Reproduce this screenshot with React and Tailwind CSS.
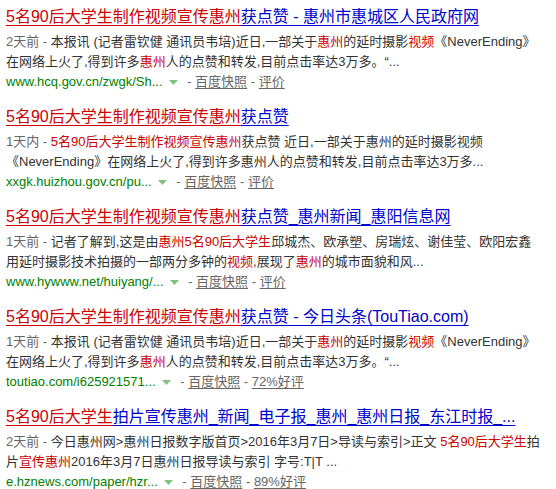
import React from "react";

const R = ({ children }) => <span className="text-[#cc0000]">{children}</span>;
const G = ({ children }) => <span className="text-[#666666]">{children}</span>;

function Title({ children }) {
  return (
    <div className="text-[16px] leading-[22px] whitespace-nowrap">
      {children}
    </div>
  );
}
const TR = ({ children }) => <span className="text-[#cc0000] underline underline-offset-[3px]">{children}</span>;
const TB = ({ children }) => <span className="text-[#0000cc] underline underline-offset-[3px]">{children}</span>;

function Arrow() {
  return (
    <svg width="9" height="5" viewBox="0 0 9 5" className="inline-block mx-[6px] align-middle">
      <path d="M0 0 L9 0 L4.5 5 Z" fill="#7fc27f" />
    </svg>
  );
}

function UrlLine({ url, rating }) {
  return (
    <div className="text-[13px] leading-[20px] whitespace-nowrap">
      <span className="text-[#008000]">{url}</span>
      <Arrow />
      <span className="text-[#666666]"> - </span>
      <span className="text-[#666666] underline underline-offset-[2px]">百度快照</span>
      <span className="text-[#666666]"> - </span>
      <span className="text-[#666666] underline underline-offset-[2px]">{rating}</span>
    </div>
  );
}

function Result({ title, lines, url, rating }) {
  return (
    <div className="mb-[14px]">
      <Title>{title}</Title>
      <div className="mt-[4px] text-[13px] leading-[20px] text-[#333333] whitespace-nowrap">
        {lines.map((l, i) => (
          <div key={i}>{l}</div>
        ))}
      </div>
      <UrlLine url={url} rating={rating} />
    </div>
  );
}

export default function App() {
  return (
    <div
      className="w-[556px] h-[489px] bg-white overflow-hidden pl-[6px] pt-[6px]"
      style={{ fontFamily: '"Liberation Sans", Arial, "Noto Sans CJK SC", sans-serif' }}
    >
      <Result
        title={
          <>
            <TR>5名90后大学生制作视频宣传惠州</TR>
            <TB>获点赞 - 惠州市惠城区人民政府网</TB>
          </>
        }
        lines={[
          <>
            <G>2天前 - </G>本报讯 (记者雷钦健 通讯员韦培)近日,一部关于<R>惠州</R>的延时摄影<R>视频</R>《NeverEnding》
          </>,
          <>
            在网络上火了,得到许多<R>惠州</R>人的点赞和转发,目前点击率达3万多。“...
          </>,
        ]}
        url="www.hcq.gov.cn/zwgk/Sh..."
        rating="评价"
      />
      <Result
        title={
          <>
            <TR>5名90后大学生制作视频宣传惠州</TR>
            <TB>获点赞</TB>
          </>
        }
        lines={[
          <>
            <G>1天内 - </G>
            <R>5名90后大学生制作视频宣传惠州</R>获点赞 近日,一部关于惠州的延时摄影视频
          </>,
          <>《NeverEnding》在网络上火了,得到许多惠州人的点赞和转发,目前点击率达3万多...</>,
        ]}
        url="xxgk.huizhou.gov.cn/pu..."
        rating="评价"
      />
      <Result
        title={
          <>
            <TR>5名90后大学生制作视频宣传惠州</TR>
            <TB>获点赞_惠州新闻_惠阳信息网</TB>
          </>
        }
        lines={[
          <>
            <G>1天前 - </G>记者了解到,这是由<R>惠州5名90后大学生</R>邱城杰、欧承塑、房瑞炫、谢佳莹、欧阳宏鑫
          </>,
          <>
            用延时摄影技术拍摄的一部两分多钟的<R>视频</R>,展现了<R>惠州</R>的城市面貌和风...
          </>,
        ]}
        url="www.hywww.net/huiyang/..."
        rating="评价"
      />
      <Result
        title={
          <>
            <TR>5名90后大学生制作视频宣传惠州</TR>
            <TB>获点赞 - 今日头条(TouTiao.com)</TB>
          </>
        }
        lines={[
          <>
            <G>1天前 - </G>本报讯 (记者雷钦健 通讯员韦培)近日,一部关于<R>惠州</R>的延时摄影<R>视频</R>《NeverEnding》
          </>,
          <>
            在网络上火了,得到许多<R>惠州</R>人的点赞和转发,目前点击率达3万多。“...
          </>,
        ]}
        url="toutiao.com/i625921571..."
        rating="72%好评"
      />
      <Result
        title={
          <>
            <TR>5名90后大学生</TR>
            <TB>拍片宣传惠州_新闻_电子报_惠州_惠州日报_东江时报_...</TB>
          </>
        }
        lines={[
          <>
            <G>2天前 - </G>今日惠州网&gt;惠州日报数字版首页&gt;2016年3月7日&gt;导读与索引&gt;正文 <R>5名90后大学生</R>拍
          </>,
          <>
            片<R>宣传惠州</R>2016年3月7日惠州日报导读与索引 字号:T|T ...
          </>,
        ]}
        url="e.hznews.com/paper/hzr..."
        rating="89%好评"
      />
    </div>
  );
}
